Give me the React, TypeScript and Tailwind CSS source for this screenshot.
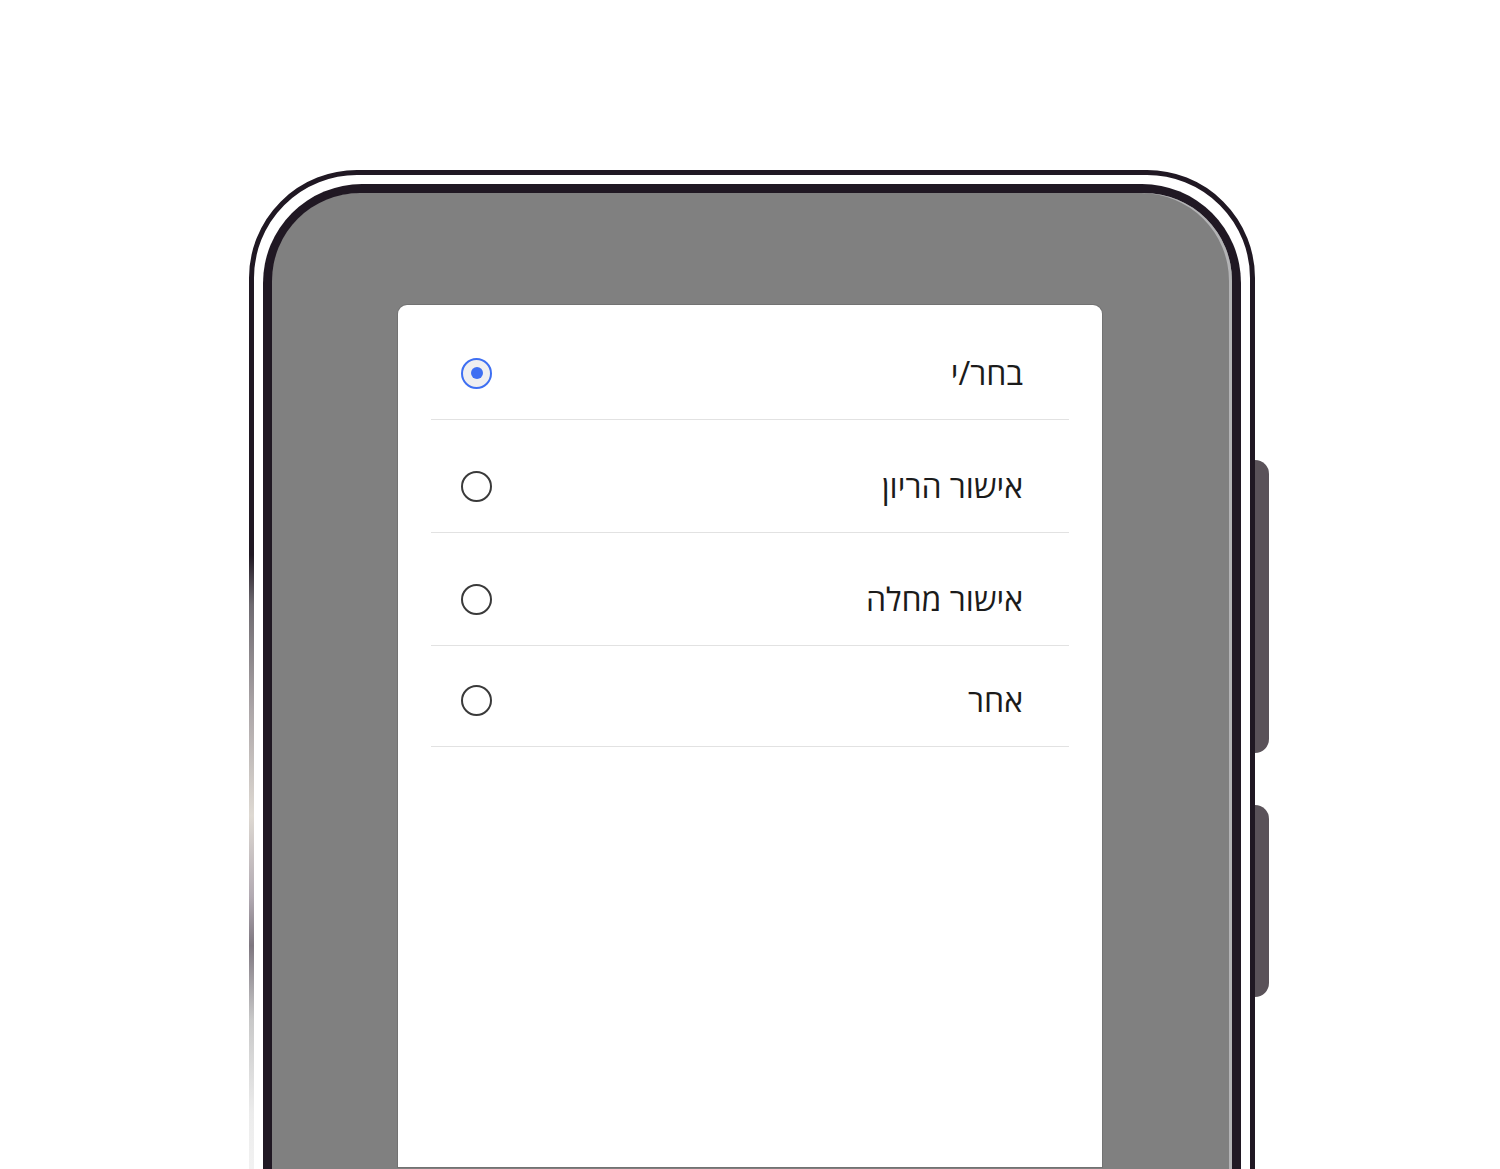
const options = [
  { label: "בחר/י", h: "h-[115px]", checked: true },
  { label: "אישור הריון", h: "h-[113px]", checked: false },
  { label: "אישור מחלה", h: "h-[113px]", checked: false },
  { label: "אחר", h: "h-[101px]", checked: false },
];

function Radio({ checked }: { checked: boolean }) {
  if (checked) {
    return (
      <span className="flex h-[31px] w-[31px] items-center justify-center rounded-full border-2 border-[#3e6ff2] bg-[#efeff1]">
        <span className="h-[12px] w-[12px] rounded-full bg-[#3e6ff2]" />
      </span>
    );
  }
  return <span className="block h-[31px] w-[31px] rounded-full border-2 border-[#3a3a3a] bg-white" />;
}

export default function App() {
  return (
    <div className="h-[1169px] w-[1500px] overflow-hidden bg-white pl-[249px] pt-[170px]">
      <div className="relative w-[1006px]">
        {/* side buttons */}
        <div className="absolute right-[-14px] top-[290px] h-[293px] w-[14px] rounded-r-[16px] bg-[#5a5259]" />
        <div className="absolute right-[-14px] top-[635px] h-[192px] w-[14px] rounded-r-[16px] bg-[#5a5259]" />

        <div className="h-[1150px] rounded-[108px] border-[5px] border-[#201823] bg-white p-[9px]">
          <div className="h-full rounded-[99px] bg-[#201823] p-[9px]">
            <div className="h-full rounded-[88px] bg-[#808080] pl-[126px] pr-[130px] pt-[112px] shadow-[inset_-3px_0_0_#b3b3b5]">
              <div
                dir="rtl"
                className="h-[862px] rounded-t-[9px] bg-white px-[33px] shadow-[0_0_0_1px_#727272]"
                style={{ fontFamily: '"Open Sans", "DejaVu Sans", sans-serif' }}
              >
                {options.map((o) => (
                  <div key={o.label} className={`flex ${o.h} items-end border-b border-[#e2e2e2]`}>
                    <div className="flex h-[92px] w-full items-center justify-between pl-[30px] pr-[46px]">
                      <span className="text-[32px] leading-none text-[#1b1b1b]">{o.label}</span>
                      <Radio checked={o.checked} />
                    </div>
                  </div>
                ))}
              </div>
            </div>
          </div>
        </div>

        {/* left edge fade of the outer rim */}
        <div className="absolute left-0 top-[385px] h-[620px] w-[5px] bg-[linear-gradient(to_bottom,#201823_0%,#6e6a70_8%,#aca6a8_25%,#ded9d2_42%,#b2aab2_55%,#7e7780_63%,#c8c8c8_75%,#ececec_90%,#f2f2f2_100%)]" />
      </div>
    </div>
  );
}
